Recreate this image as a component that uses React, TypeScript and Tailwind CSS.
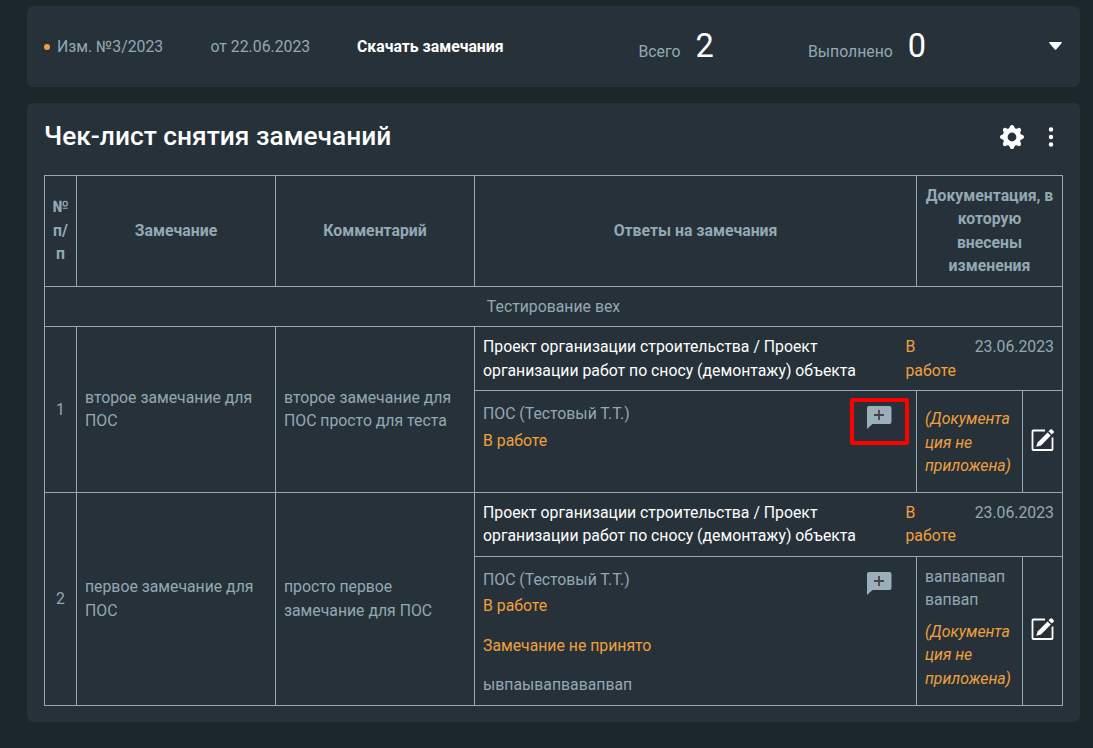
import type { ReactNode } from "react";
import { BsGearFill, BsThreeDotsVertical } from "react-icons/bs";

function Cell({ className = "", children }: { className?: string; children?: ReactNode }) {
  return <div className={`border-r border-b border-[#93a9b4] ${className}`}>{children}</div>;
}

function AddCommentIcon() {
  return (
    <svg width="25" height="24" viewBox="0 0 25 24" className="block">
      <path d="M2 0H22.500Q24.500 0 24.500 2V16Q24.500 18 22.500 18H5.500L0 23V2Q0 0 2 0Z" fill="#9aafba" />
      <path d="M12 4V14M7 9H17" stroke="#4a4344" strokeWidth="1.800" fill="none" />
    </svg>
  );
}

function EditIcon() {
  return (
    <svg width="24" height="24" viewBox="0 0 24 24" className="block" fill="none">
      <path d="M14 2.500H2.200Q1.500 2.500 1.500 3.200V21.300Q1.500 22 2.200 22H20.800Q21.500 22 21.500 21.300V9.500" stroke="#fff" strokeWidth="1.800" />
      <path d="M5.200 18.800L6.800 14.200L16.600 4.400L19.800 7.600L10 17.400Z" fill="#fff" />
      <path d="M17.500 3.300L19.300 1.500Q20.200 .8 21 1.500L22.600 3.100Q23.400 4 22.600 4.800L20.800 6.600Z" fill="#fff" />
    </svg>
  );
}

interface Remark {
  id: number;
  text: string;
  comment: string;
  highlighted?: boolean;
  reply?: string;
  documentation?: string;
}

const remarks: Remark[] = [
  { id: 1, text: "второе замечание для ПОС", comment: "второе замечание для ПОС просто для теста", highlighted: true },
  {
    id: 2,
    text: "первое замечание для ПОС",
    comment: "просто первое замечание для ПОС",
    reply: "ывпаывапвавапвап",
    documentation: "вапвапвап вапвап",
  },
];

function RemarkRow({ item }: { item: Remark }) {
  return (
    <div className="grid grid-cols-[32px_199px_199px_588px]">
      <Cell className="flex items-center justify-center">{item.id}</Cell>
      <Cell className="flex items-center px-2 pb-[0.4px]">{item.text}</Cell>
      <Cell className="flex items-center px-2 pb-[0.4px]">{item.comment}</Cell>
      <div>
        <Cell className={`flex h-16 px-2 ${item.reply ? "pt-[7.6px]" : "pt-2"}`}>
          <div className="w-[422.5px] pr-8 text-white">
            Проект организации строительства / Проект организации работ по сносу (демонтажу) объекта
          </div>
          <div className="w-[60px] text-[#f0a03c]">В работе</div>
          <div className="flex-1 text-right">23.06.2023</div>
        </Cell>
        <div className={`grid grid-cols-[442px_106px_40px] ${item.reply ? "h-[149px]" : "h-[102px]"}`}>
          <Cell className={`relative px-2 ${item.reply ? "pt-[10.6px]" : "pt-[11px]"}`}>
            <div>ПОС (Тестовый Т.Т.)</div>
            <div className="mt-[3px] text-[#f0a03c]">В работе</div>
            {item.reply && (
              <>
                <div className="mt-4 text-[#f0a03c]">Замечание не принято</div>
                <div className="mt-4">{item.reply}</div>
              </>
            )}
            <div className="absolute top-[15px] left-[392px]">
              <AddCommentIcon />
            </div>
            {item.highlighted && (
              <div className="absolute top-[7px] left-[374.5px] h-[46.5px] w-[59px] rounded-[2px] border-4 border-[#ff0000]" />
            )}
          </Cell>
          <Cell className={`flex flex-col gap-2 px-2 ${item.reply ? "pt-[7.6px]" : "pt-4"}`}>
            {item.documentation && <div>{item.documentation}</div>}
            <div className="text-[#f0a03c] italic">
              (Документа
              <br />
              ция не
              <br />
              приложена)
            </div>
          </Cell>
          <Cell className="flex items-center justify-center pb-1">
            <EditIcon />
          </Cell>
        </div>
      </div>
    </div>
  );
}

export default function App() {
  return (
    <div className="flex h-[748px] w-[1093px] flex-col gap-4 overflow-hidden bg-[#1c272c] pt-1.5 pr-[13px] pl-[27px] font-[Roboto,sans-serif] text-[15.8px] leading-[23.5px] text-[#93a9b4]">
      <header className="flex h-[81px] shrink-0 items-center rounded-md bg-[#273139] pr-[18px] pl-[17px]">
        <span className="mr-[7px] size-[6px] rounded-full bg-[#f0a03c]" />
        <span className="w-[153.5px]">Изм. №3/2023</span>
        <span className="w-[146.5px]">от 22.06.2023</span>
        <span className="w-[281.5px] font-bold text-white">Скачать замечания</span>
        <div className="flex w-[169.5px] items-baseline gap-[15px] pt-[5px]">
          <span>Всего</span>
          <span className="text-[32.5px] text-white">2</span>
        </div>
        <div className="flex items-baseline gap-[15px] pt-[5px]">
          <span>Выполнено</span>
          <span className="text-[32.5px] text-white">0</span>
        </div>
        <svg width="13" height="8" viewBox="0 0 13 8" className="mb-0.5 ml-auto">
          <path d="M.7 0H12.300Q13.200 .2 12.700 1L7.200 7.500Q6.500 8.200 5.800 7.500L.3 1Q-.2 .2 .7 0Z" fill="#fff" />
        </svg>
      </header>
      <main className="h-[619px] shrink-0 rounded-md bg-[#273139] px-[17px]">
        <div className="flex h-[72px] items-center justify-between pb-1">
          <h1 className="text-[26.35px] font-medium text-white">Чек-лист снятия замечаний</h1>
          <div className="flex items-center gap-[15px] text-white">
            <BsGearFill size={24} />
            <BsThreeDotsVertical size={24} />
          </div>
        </div>
        <div className="w-[1019px] border-t border-l border-[#93a9b4]">
          <div className="grid h-[111px] grid-cols-[32px_199px_199px_442px_146px] text-center font-bold">
            <Cell className="flex items-center justify-center px-2 pb-[0.6px]">№ п/ п</Cell>
            <Cell className="flex items-center justify-center">Замечание</Cell>
            <Cell className="flex items-center justify-center">Комментарий</Cell>
            <Cell className="flex items-center justify-center">Ответы на замечания</Cell>
            <Cell className="flex items-center justify-center px-2 pb-[0.6px]">Документация, в которую внесены изменения</Cell>
          </div>
          <Cell className="flex h-10 items-center justify-center">Тестирование вех</Cell>
          {remarks.map((item) => (
            <RemarkRow key={item.id} item={item} />
          ))}
        </div>
      </main>
    </div>
  );
}
